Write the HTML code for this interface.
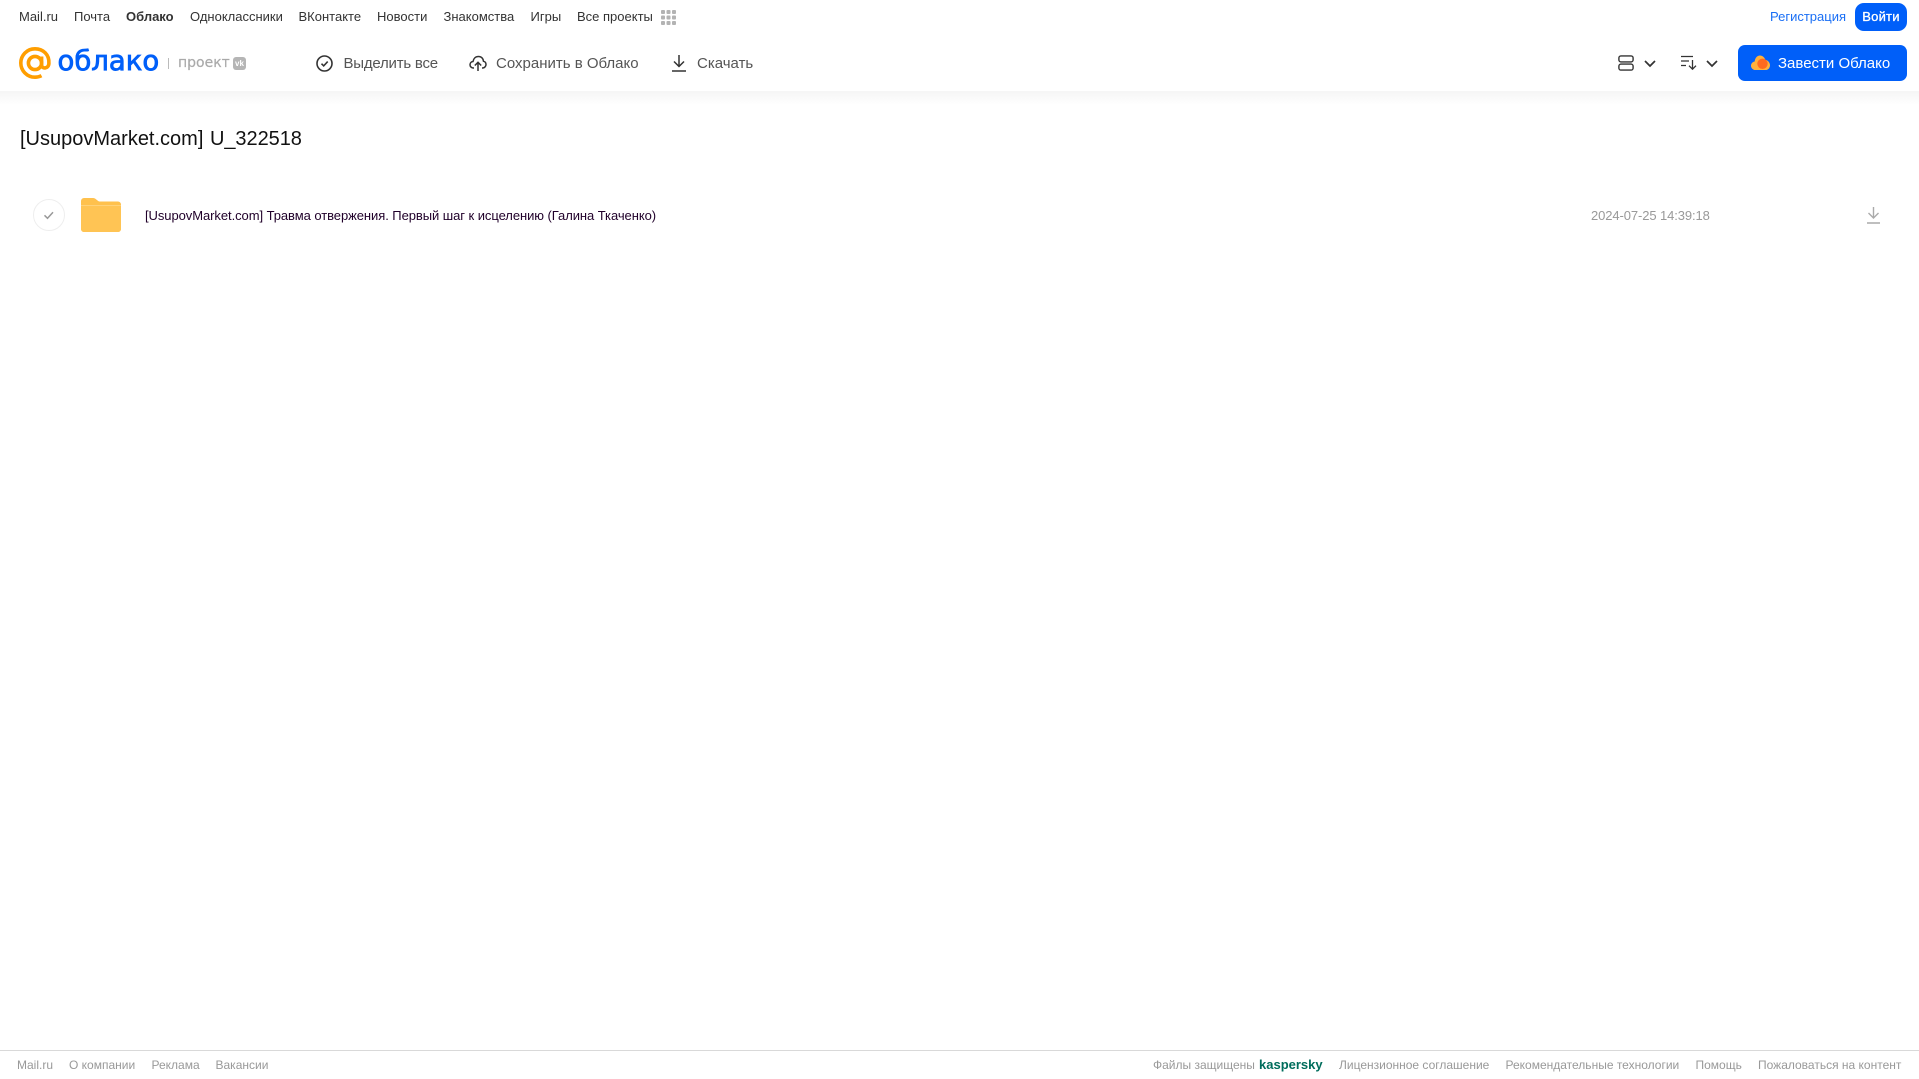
<!DOCTYPE html>
<html lang="ru"><head><meta charset="utf-8"><title>Облако</title>
<style>
html,body{margin:0;padding:0;background:#fff;width:1919px;height:1079px;overflow:hidden;font-family:"Liberation Sans",Arial,sans-serif}
.t{position:absolute;white-space:nowrap;line-height:20px}
.n{top:7px;font-size:13px;color:#333}
.a{top:54px;font-size:15px;color:#555;height:20px}
.f{top:1055px;font-size:12px;color:#999}
svg{position:absolute;overflow:visible}
</style></head><body>
<div style="position:absolute;left:0;top:91px;width:1919px;height:14px;background:linear-gradient(#f5f5f5,#fff)"></div>

<div class="t n" style="left:19px">Mail.ru</div>
<div class="t n" style="left:74px">Почта</div>
<div class="t n" style="left:126px;font-weight:bold">Облако</div>
<div class="t n" style="left:190px">Одноклассники</div>
<div class="t n" style="left:298.500px">ВКонтакте</div>
<div class="t n" style="left:377px">Новости</div>
<div class="t n" style="left:443.500px">Знакомства</div>
<div class="t n" style="left:530.500px">Игры</div>
<div class="t n" style="left:577px">Все проекты</div>
<svg style="left:661px;top:10px" width="15" height="15" fill="#b3b3b3"><rect width="4" height="4" rx="1"/><rect x="5.500" width="4" height="4" rx="1"/><rect x="11" width="4" height="4" rx="1"/><rect y="5.500" width="4" height="4" rx="1"/><rect x="5.500" y="5.500" width="4" height="4" rx="1"/><rect x="11" y="5.500" width="4" height="4" rx="1"/><rect y="11" width="4" height="4" rx="1"/><rect x="5.500" y="11" width="4" height="4" rx="1"/><rect x="11" y="11" width="4" height="4" rx="1"/></svg>

<svg style="left:19px;top:47px" width="32" height="32" fill="none" stroke="#ff9e00" stroke-width="3.600"><circle cx="16" cy="16" r="6.600"/><path d="M22.600 9.500V18c0 4.200 6.900 4.200 7.300-1.500C30.500 7.500 24 1.800 16 1.800 8 1.800 1.800 8.300 1.800 16S8 30.200 16 30.200c2.500 0 4.500-.5 6.500-1.500"/></svg>
<div class="t" style="left:57.500px;top:43px;font-family:'DejaVu Sans','Liberation Sans',sans-serif;font-size:27.500px;line-height:36px;color:#005ff9;-webkit-text-stroke:.8px #005ff9">облако</div>
<div style="position:absolute;left:168px;top:58px;width:1px;height:11px;background:#bbb"></div>
<div class="t" style="left:178px;top:53px;font-family:'DejaVu Sans','Liberation Sans',sans-serif;font-size:14px;color:#aaa;-webkit-text-stroke:.2px #aaa">проект</div>
<div class="t" style="left:233px;top:57px;width:13px;height:13px;background:#b5b5b5;border-radius:3px;color:#fff;font-size:8px;line-height:13px;font-weight:bold;text-align:center">vk</div>

<svg style="left:316px;top:55px" width="17" height="17" fill="none" stroke="#333" stroke-width="1.600"><circle cx="8.500" cy="8.500" r="7.500"/><path d="M5.500 8.700l2.200 2.200 4-4.300"/></svg>
<div class="t a" style="left:343.500px;letter-spacing:-.22px">Выделить все</div>
<svg style="left:469px;top:54px" width="18" height="18" fill="none" stroke="#333" stroke-width="1.500"><path d="M5 14H4.500C2.500 14 1 12.500 1 10.700 1 9 2.300 7.700 4 7.500 4.500 4.500 6.500 2.500 9.500 2.500c2.800 0 4.800 2 5 4.800 1.500.3 2.500 1.600 2.500 3.200 0 1.900-1.500 3.500-3.500 3.500H13"/><path d="M9 17V8.500M5.800 11.500L9 8.300l3.200 3.200"/></svg>
<div class="t a" style="left:496px">Сохранить в Облако</div>
<svg style="left:672px;top:54px" width="14" height="18" fill="none" stroke="#333" stroke-width="1.500"><path d="M7 1v11M2 7.500l5 5 5-5M0 17h14"/></svg>
<div class="t a" style="left:697px">Скачать</div>

<svg style="left:1618px;top:55px" width="16" height="16" fill="none" stroke="#333" stroke-width="1.400"><rect x=".9" y=".9" width="14.200" height="6" rx="2"/><rect x=".9" y="9.100" width="14.200" height="6" rx="2"/></svg>
<svg style="left:1644px;top:60px" width="12" height="7" fill="none" stroke="#333" stroke-width="1.700"><path d="M1 1l5 5 5-5"/></svg>
<svg style="left:1681px;top:55px" width="16" height="15" fill="none" stroke="#333" stroke-width="1.300"><path d="M0 1.500h12M0 6h8M0 10.500h5M11.500 5v9M8 10.700l3.500 3.500 3.500-3.500"/></svg>
<svg style="left:1706px;top:60px" width="12" height="7" fill="none" stroke="#333" stroke-width="1.700"><path d="M1 1l5 5 5-5"/></svg>

<div class="t" style="left:1770px;top:7px;font-size:13px;color:#1a6ff5">Регистрация</div>
<div class="t" style="left:1855px;top:3px;width:52px;height:28px;line-height:27px;background:#005ff9;border-radius:9px;color:#fff;font-size:13px;letter-spacing:.2px;-webkit-text-stroke:.3px #fff;text-align:center">Войти</div>
<div style="position:absolute;left:1738px;top:45px;width:169px;height:36px;background:#005ff9;border-radius:7px"></div>
<svg style="left:1751px;top:54px" width="19" height="18"><path d="M4.500 16C2 16 0 14 0 11.700 0 9.500 1.700 7.800 3.700 7.500 4 4 6 1.500 9 1.500c2.500 0 4.500 1.800 5.200 4.200C17 6.300 19 8.500 19 11.200 19 14 17 16 14.500 16z" fill="#ffb13b"/><circle cx="11.500" cy="9.800" r="5.200" fill="#ff6a1f"/></svg>
<div class="t" style="left:1778px;top:54px;font-size:15px;color:#fff">Завести Облако</div>

<div class="t" style="left:20px;top:125px;font-size:20px;line-height:28px;color:#111">[UsupovMarket.com] <span style="margin-left:1px;letter-spacing:-.05px">U_322518</span></div>

<svg style="left:33px;top:199px" width="32" height="32" fill="none"><circle cx="16" cy="16" r="15.500" stroke="#eee"/><path d="M11.500 16.300l3 3 5.500-6" stroke="#999" stroke-width="1.500"/></svg>
<svg style="left:81px;top:198px" width="40" height="35"><path d="M0 3a3 3 0 0 1 3-3h9c3 0 4 3 6.500 3.500H37a3 3 0 0 1 3 3V31a3 3 0 0 1-3 3H3a3 3 0 0 1-3-3z" fill="#ffc14d"/><path d="M0 8h40v23a3 3 0 0 1-3 3H3a3 3 0 0 1-3-3z" fill="#ffc454"/><rect y="7" width="40" height="1" fill="#ffd27a"/></svg>
<div class="t" style="left:145px;top:206px;font-size:13px;letter-spacing:-.065px;color:#20002a">[UsupovMarket.com] Травма отвержения. Первый шаг к исцелению (Галина Ткаченко)</div>
<div class="t" style="left:1591px;top:206px;font-size:13px;letter-spacing:-.1px;color:#999">2024-07-25 14:39:18</div>
<svg style="left:1867px;top:207px" width="13" height="17" fill="none" stroke="#aaa" stroke-width="1.400"><path d="M6.500 0v11M1.500 6l5 5 5-5M0 16h13"/></svg>

<div style="position:absolute;left:0;top:1050px;width:1919px;height:1px;background:#d9d9d9"></div>
<div class="t f" style="left:17px">Mail.ru</div>
<div class="t f" style="left:69px">О компании</div>
<div class="t f" style="left:151.500px">Реклама</div>
<div class="t f" style="left:215.500px">Вакансии</div>
<div class="t f" style="left:1153px">Файлы защищены</div>
<div class="t" style="left:1259px;top:1055px;font-size:13px;font-weight:bold;color:#006d5c">kaspersky</div>
<div class="t f" style="left:1339px">Лицензионное соглашение</div>
<div class="t f" style="left:1505.500px">Рекомендательные технологии</div>
<div class="t f" style="left:1695.500px">Помощь</div>
<div class="t f" style="left:1758px">Пожаловаться на контент</div>
</body></html>
